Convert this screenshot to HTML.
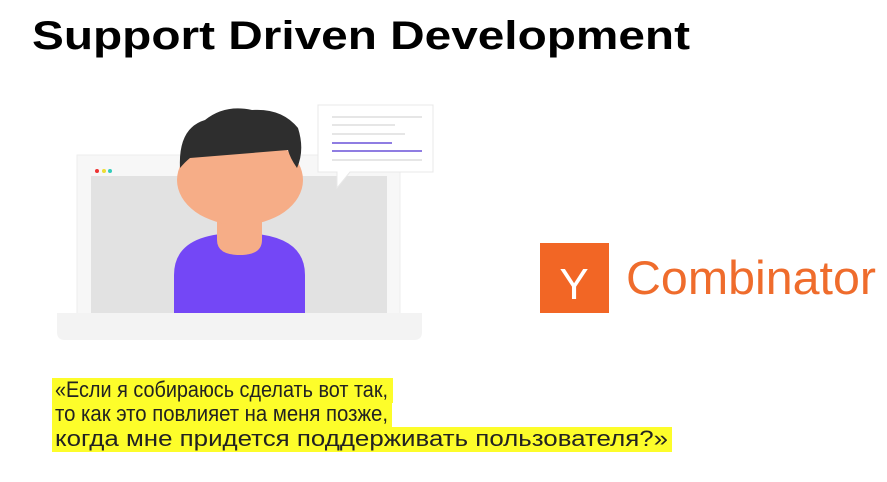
<!DOCTYPE html><html><head><style>
body{margin:0;width:887px;height:482px;background:#fff;position:relative;overflow:hidden;font-family:"Liberation Sans",sans-serif}
.a{position:absolute}
</style></head><body>
<svg class="a" style="left:0;top:0" width="887" height="482" font-family="Liberation Sans">
<text x="32" y="49" font-size="40" font-weight="bold" textLength="658" lengthAdjust="spacingAndGlyphs" fill="#000">Support Driven Development</text>
<rect x="77" y="155" width="323" height="160" fill="#f7f7f7" stroke="#eee"/>
<rect x="91" y="176" width="296" height="138" fill="#e2e2e2"/>
<circle cx="97" cy="171" r="2" fill="#e33"/><circle cx="104" cy="171" r="2" fill="#ed3"/><circle cx="110" cy="171" r="2" fill="#3cb"/>
<path d="M57 313 H422 V332 Q422 340 414 340 H65 Q57 340 57 332 Z" fill="#f3f3f3"/>
<path d="M174 313 V275 Q174 233 239 233 Q305 233 305 275 V313 Z" fill="#7447f6"/>
<path d="M217 215 H262 V240 Q262 255 240 255 Q217 255 217 240 Z" fill="#f6ad87"/>
<ellipse cx="240" cy="180" rx="63" ry="45" fill="#f6ad87"/>
<path d="M180 168 Q178 128 205 120 Q225 104 252 110 Q282 108 298 128 Q305 150 297 168 Q290 158 288 150 L190 158 Q185 162 180 168Z" fill="#2e2e2e"/>
<path d="M318 105 H433 V172 H350 L337 188 V172 H318 Z" fill="#fff" stroke="#e8e8e8"/>
<g stroke-width="1.5"><line x1="332" y1="117" x2="422" y2="117" stroke="#ddd"/><line x1="332" y1="125" x2="395" y2="125" stroke="#ddd"/><line x1="332" y1="134" x2="405" y2="134" stroke="#ddd"/><line x1="332" y1="143" x2="392" y2="143" stroke="#6a52d9"/><line x1="332" y1="151" x2="422" y2="151" stroke="#6a52d9"/><line x1="332" y1="160" x2="422" y2="160" stroke="#ddd"/></g>
<rect x="540" y="243" width="69" height="70" fill="#f26625"/>
<text x="574" y="299" fill="#fff" font-size="44" text-anchor="middle">Y</text>
<text x="626" y="294" fill="#ef6c2c" font-size="47" textLength="250" lengthAdjust="spacingAndGlyphs">Combinator</text>
<rect x="52" y="378" width="341" height="25" fill="#fdfd2a"/>
<rect x="52" y="402" width="340" height="25" fill="#fdfd2a"/>
<rect x="52" y="427" width="620" height="25" fill="#fdfd2a"/>
<g font-size="22" fill="#222">
<text x="55" y="397" textLength="333" lengthAdjust="spacingAndGlyphs">«Если я собираюсь сделать вот так,</text>
<text x="55" y="421" textLength="333" lengthAdjust="spacingAndGlyphs">то как это повлияет на меня позже,</text>
<text x="55" y="446" textLength="613" lengthAdjust="spacingAndGlyphs">когда мне придется поддерживать пользователя?»</text>
</g>
</svg>
</body></html>
